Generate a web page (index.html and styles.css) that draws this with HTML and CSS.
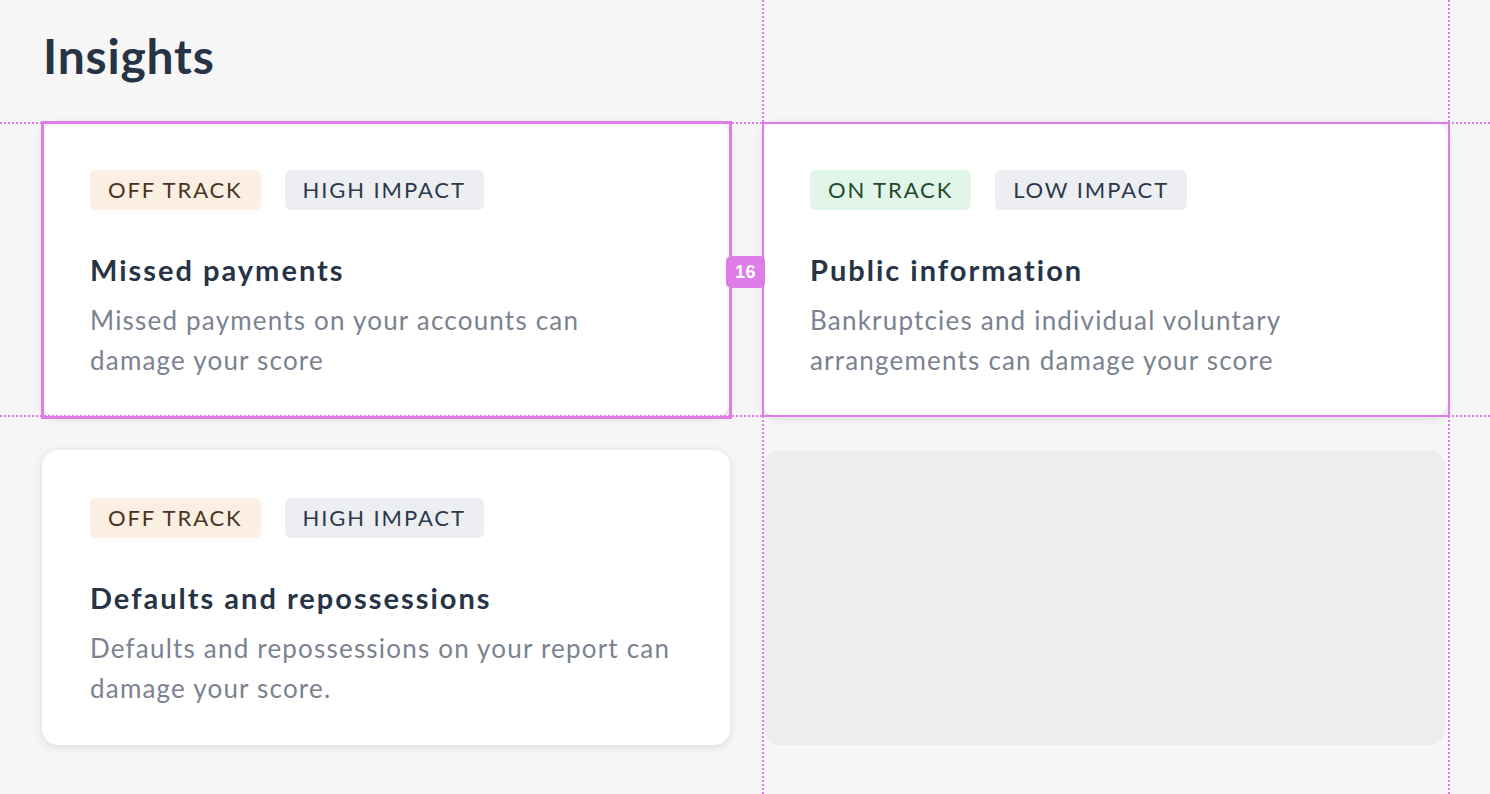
FILE: index.html
```html
<!DOCTYPE html>
<html lang="en">
<head>
<meta charset="utf-8">
<title>Insights</title>
<link rel="stylesheet" href="styles.css">
</head>
<body>
<main class="page">
  <h1 class="page-title">Insights</h1>
  <div class="grid">
    <article class="card">
      <div class="tags">
        <span class="tag tag-off">OFF TRACK</span>
        <span class="tag tag-impact">HIGH IMPACT</span>
      </div>
      <h2 class="card-title">Missed payments</h2>
      <p class="card-text">Missed payments on your accounts can damage your score</p>
    </article>
    <article class="card">
      <div class="tags">
        <span class="tag tag-on">ON TRACK</span>
        <span class="tag tag-impact">LOW IMPACT</span>
      </div>
      <h2 class="card-title">Public information</h2>
      <p class="card-text">Bankruptcies and individual voluntary arrangements can damage your score</p>
    </article>
    <article class="card">
      <div class="tags">
        <span class="tag tag-off">OFF TRACK</span>
        <span class="tag tag-impact">HIGH IMPACT</span>
      </div>
      <h2 class="card-title">Defaults and repossessions</h2>
      <p class="card-text">Defaults and repossessions on your report can damage your score.</p>
    </article>
    <div class="placeholder"></div>
  </div>
</main>

<div class="overlay" aria-hidden="true">
  <div class="guide-h guide-top"></div>
  <div class="guide-h guide-bottom"></div>
  <div class="guide-v guide-left"></div>
  <div class="guide-v guide-right"></div>
  <div class="outline outline-selected"></div>
  <div class="outline outline-hover"></div>
  <div class="gap-badge">16</div>
</div>
</body>
</html>
```

FILE: styles.css
```css
* { box-sizing: border-box; }

html, body {
  margin: 0;
  padding: 0;
  background: #f6f6f6;
}

body {
  font-family: Lato, "Open Sans", sans-serif;
  color: #263446;
  width: 1490px;
  height: 794px;
  overflow: hidden;
  position: relative;
}

.page {
  padding: 28px 42px 0 42px;
}

.page-title {
  margin: 0 0 38px 1px;
  font-size: 48px;
  line-height: 56px;
  font-weight: 700;
  color: #263446;
  letter-spacing: 0.8px;
}

.grid {
  display: grid;
  grid-template-columns: 688px 686px;
  grid-template-rows: 295px 295px;
  column-gap: 32px;
  row-gap: 33px;
}

.card {
  background: #ffffff;
  border-radius: 16px;
  box-shadow: 0 2px 8px rgba(20, 30, 50, 0.12);
  padding: 48px 40px 0 48px;
}

.tags {
  display: flex;
  gap: 24px;
}

.tag {
  display: inline-block;
  height: 40px;
  line-height: 40px;
  padding: 0 18px;
  border-radius: 6px;
  font-size: 22px;
  letter-spacing: 1.9px;
  font-weight: 400;
}

.tag-off {
  background: #fbeee2;
  color: #4a3421;
}

.tag-on {
  background: #e1f6e9;
  color: #1f4a2b;
}

.tag-impact {
  background: #eceef1;
  color: #2c394b;
}

.card-title {
  margin: 42px 0 12px 0;
  font-size: 29px;
  line-height: 36px;
  font-weight: 700;
  color: #263446;
  letter-spacing: 2px;
}

.card-text {
  margin: 0;
  max-width: 584px;
  font-size: 26px;
  line-height: 40px;
  color: #7b8390;
  letter-spacing: 1.2px;
}

.placeholder {
  background: #ecedef;
  border-radius: 16px;
  margin: 0 3px 0 2px;
}

/* Dev-tool style inspector overlay */
.overlay {
  position: absolute;
  inset: 0;
  pointer-events: none;
}

.guide-h {
  position: absolute;
  left: 0;
  width: 1490px;
  height: 2px;
  background: repeating-linear-gradient(to right, #de7ce8 0 2px, transparent 2px 4px);
}

.guide-top { top: 122px; }
.guide-bottom { top: 415px; }

.guide-v {
  position: absolute;
  top: 0;
  height: 794px;
  width: 2px;
  background: repeating-linear-gradient(to bottom, #de7ce8 0 2px, transparent 2px 4px);
}

.guide-left { left: 762px; }
.guide-right { left: 1448px; }

.outline {
  position: absolute;
  border-style: solid;
  border-color: #de7ce8;
}

.outline-selected {
  left: 41px;
  top: 121px;
  width: 691px;
  height: 298px;
  border-width: 3px;
}

.outline-hover {
  left: 762px;
  top: 122px;
  width: 688px;
  height: 295px;
  border-width: 2px;
}

.gap-badge {
  position: absolute;
  left: 726px;
  top: 256px;
  width: 39px;
  height: 32px;
  border-radius: 5px;
  background: #de7ce8;
  color: #ffffff;
  font-family: "Liberation Sans", Arial, sans-serif;
  font-weight: 700;
  font-size: 18px;
  letter-spacing: 0.5px;
  line-height: 32px;
  text-align: center;
}
```
